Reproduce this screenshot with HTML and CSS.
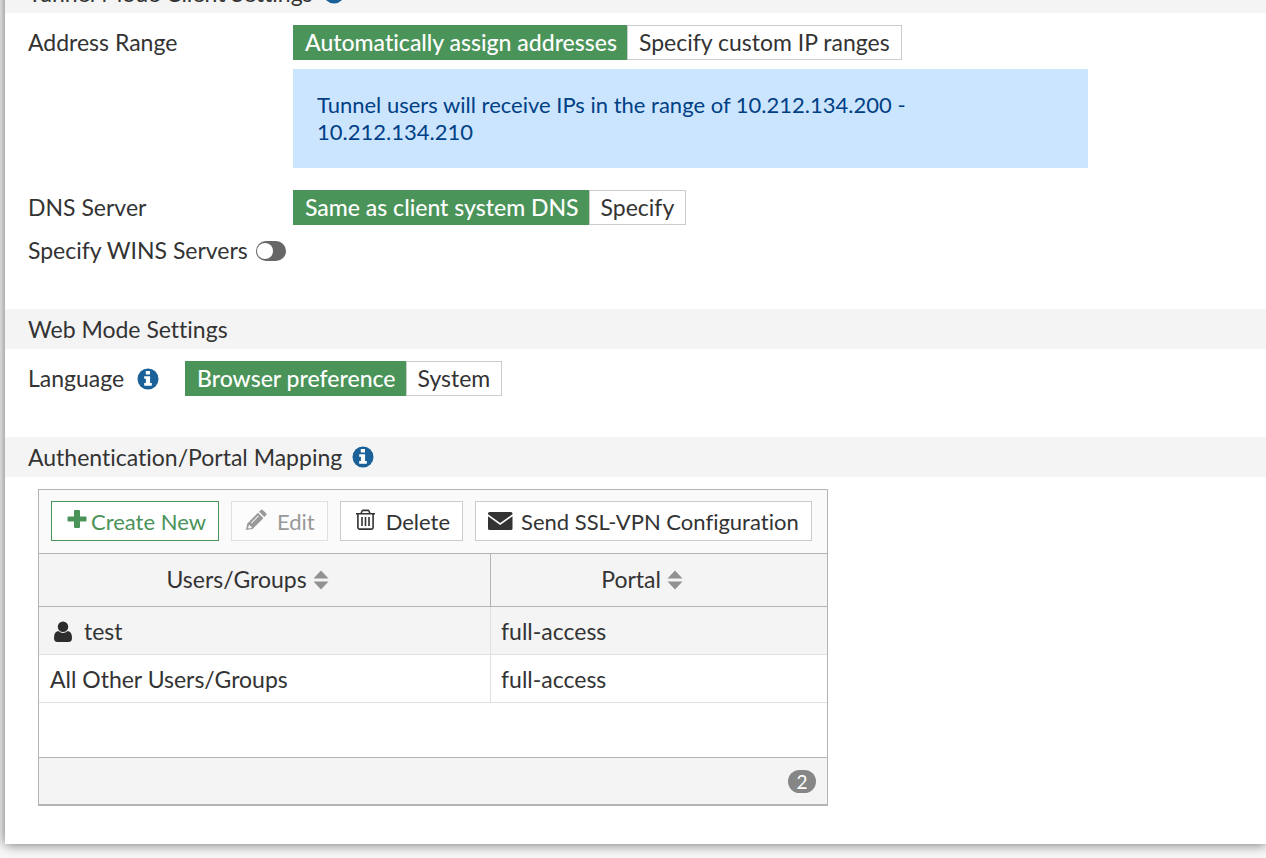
FILE: index.html
```html
<!DOCTYPE html>
<html lang="en">
<head>
<meta charset="utf-8">
<title>SSL-VPN Settings</title>
<link rel="stylesheet" href="styles.css">
</head>
<body>
<svg class="sprite" aria-hidden="true">
  <symbol id="info" viewBox="0 0 22 22">
    <circle cx="11" cy="11" r="10.5" fill="#1a6199"/>
    <path fill="#fff" d="M8.8 2.9h4.2v3.7H8.8zM7.2 8.2h5.9v6.9h1.7v2.6H7.2v-2.6h1.7v-4.3H7.2z"/>
  </symbol>
  <symbol id="sort" viewBox="0 0 16 20">
    <path fill="#919191" d="M8 .5l7.500 8H.5zM8 19.500l7.500-8H.5z"/>
  </symbol>
</svg>
<main class="panel">
  <section class="section">
    <h2 class="section-title">Tunnel Mode Client Settings <svg class="info"><use href="#info"/></svg></h2>
    <div class="fields">
      <div class="field">
        <span class="field-label" id="range-label">Address Range</span>
        <div class="field-body">
          <div class="segmented" role="radiogroup" aria-labelledby="range-label">
            <label class="segment"><input type="radio" name="range" checked>Automatically assign addresses</label>
            <label class="segment"><input type="radio" name="range">Specify custom IP ranges</label>
          </div>
          <p class="notice">Tunnel users will receive IPs in the range of 10.212.134.200 - 10.212.134.210</p>
        </div>
      </div>
      <div class="field field-dns">
        <span class="field-label" id="dns-label">DNS Server</span>
        <div class="segmented" role="radiogroup" aria-labelledby="dns-label">
          <label class="segment"><input type="radio" name="dns" checked>Same as client system DNS</label>
          <label class="segment"><input type="radio" name="dns">Specify</label>
        </div>
      </div>
      <div class="field field-wins">
        <label for="wins">Specify WINS Servers</label>
        <input class="switch" type="checkbox" role="switch" id="wins">
      </div>
    </div>
  </section>

  <section class="section">
    <h2 class="section-title">Web Mode Settings</h2>
    <div class="fields">
      <div class="field">
        <span class="field-label field-label-auto" id="lang-label">Language <svg class="info"><use href="#info"/></svg></span>
        <div class="segmented" role="radiogroup" aria-labelledby="lang-label">
          <label class="segment"><input type="radio" name="lang" checked>Browser preference</label>
          <label class="segment"><input type="radio" name="lang">System</label>
        </div>
      </div>
    </div>
  </section>

  <section class="section">
    <h2 class="section-title">Authentication/Portal Mapping <svg class="info"><use href="#info"/></svg></h2>
    <div class="grid">
      <div class="toolbar">
        <button class="btn btn-create" type="button"><svg class="btn-icon" viewBox="0 0 27 24"><path fill="currentColor" d="M12 1h4q1 0 1 1v5.500h5.500q1 0 1 1v3q0 1-1 1H17V18q0 1-1 1h-4q-1 0-1-1v-5.500H5.500q-1 0-1-1v-3q0-1 1-1H11V2q0-1 1-1z"/></svg>Create New</button>
        <button class="btn" type="button" disabled><svg class="btn-icon" viewBox="0 0 27 24"><path fill="currentColor" fill-rule="evenodd" d="M3 21l1.300-6.500L15 3.800l5.400 5.400-10.800 10.800zM5.800 16l-.7 3 .6.600 2.800-.7v-1.600H6.800V16zM8 13.800l.6.600 7.200-7.200-.6-.6zM16 2.800l1.900-1.800q.9-.9 1.900 0l3.300 3.300q.9 1 0 1.900l-1.800 1.900z"/></svg>Edit</button>
        <button class="btn" type="button"><svg class="btn-icon" viewBox="0 0 27 24"><g fill="none" stroke="currentColor" stroke-width="1.600"><path d="M4 4.800h19M9 4.500l1.200-2.700q.2-.4.700-.4h5.200q.5 0 .7.400L18 4.500M5.900 5v13.500q0 1.600 1.600 1.600h12q1.600 0 1.600-1.600V5M10 8v9M13.500 8v9M17 8v9"/></g></svg>Delete</button>
        <button class="btn" type="button"><svg class="btn-icon" viewBox="0 0 27 24"><path fill="currentColor" d="M2.500 3h21.500q1.500 0 1.500 1.500v.8L13.200 14 1 5.300v-.8Q1 3 2.500 3zM1 7.200l12.200 8.700 12.300-8.700v12.300q0 1.500-1.500 1.500H2.500Q1 21 1 19.500z"/></svg>Send SSL-VPN Configuration</button>
      </div>
      <table class="table">
        <thead>
          <tr>
            <th class="col-users" scope="col">Users/Groups <svg class="sort"><use href="#sort"/></svg></th>
            <th scope="col">Portal <svg class="sort"><use href="#sort"/></svg></th>
          </tr>
        </thead>
        <tbody>
          <tr>
            <td><svg class="user" viewBox="0 0 18 22"><path fill="#2d2d2d" d="M9 .5a5.200 5.200 0 0 1 0 10.500A5.200 5.200 0 0 1 9 .5zM4.300 10q4.700 4 9.400 0Q18 10.500 18 17q0 4-3.500 4h-11Q0 21 0 17q0-6.500 4.300-7z"/></svg>test</td>
            <td>full-access</td>
          </tr>
          <tr>
            <td>All Other Users/Groups</td>
            <td>full-access</td>
          </tr>
        </tbody>
      </table>
      <div class="grid-footer"><span class="count">2</span></div>
    </div>
  </section>
</main>
</body>
</html>
```
FILE: styles.css
```css
* {
  box-sizing: border-box;
}

body {
  display: flow-root;
  min-height: 100vh;
  margin: 0;
  background: #f8f8f8;
  color: #333;
  font: 400 23px/27px Lato, "Liberation Sans", sans-serif;
  font-variant-ligatures: none;
}

.sprite {
  display: none;
}

/* The page is scrolled: the first heading is partly above the window. */
.panel {
  margin: -27px 0 0 5px;
  padding-bottom: 38px;
  background: #fff;
  box-shadow: 0 0 12px rgba(0, 0, 0, 0.6);
}

.section-title {
  display: flex;
  align-items: center;
  gap: 10px;
  height: 40px;
  margin: 0;
  padding: 0 23px;
  background: #f4f4f4;
  font-size: 23px;
  font-weight: 400;
}

.info {
  flex: none;
  width: 22px;
  height: 22px;
}

.fields {
  padding: 12px 23px 41px;
}

.field {
  display: flex;
  align-items: flex-start;
}

.field-label {
  display: flex;
  flex: none;
  align-items: center;
  width: 265px;
  height: 35px;
}

.field-label-auto {
  gap: 13px;
  width: 157px;
}

.field-body {
  flex: 1;
}

.field-dns {
  margin-top: 22px;
}

.field-wins {
  align-items: center;
  gap: 8px;
  height: 35px;
  margin-top: 8px;
}

.segmented {
  display: flex;
}

.segment {
  position: relative;
  height: 35px;
  padding: 3px 11px;
  border: 1px solid #ccc;
  background: #fff;
  white-space: nowrap;
}

.segment:has(input:checked) {
  padding-right: 10px;
  border-color: #4a9359;
  border-right: 0;
  background: #4a9359;
  color: #fff;
  font-weight: 500;
}

.segment input {
  position: absolute;
  inset: 0;
  margin: 0;
  appearance: none;
}

.notice {
  max-width: 795px;
  margin: 9px 0 0;
  padding: 22px 24px 23px;
  background: #cce5ff;
  color: #004085;
  font-size: 22px;
}

.switch {
  position: relative;
  width: 30px;
  height: 20px;
  margin: 0;
  border-radius: 10px;
  background: #666;
  appearance: none;
}

.switch::before {
  content: "";
  position: absolute;
  top: 2px;
  left: 1px;
  width: 16px;
  height: 16px;
  border-radius: 50%;
  background: #fff;
}

.grid {
  max-width: 790px;
  margin: 12px 33px 0;
  border: 1px solid #b4b4b4;
  border-bottom-width: 2px;
}

.toolbar {
  display: flex;
  gap: 12px;
  padding: 11px 12px 12px;
  background: #fafafa;
}

.btn {
  display: flex;
  align-items: center;
  gap: 7px;
  height: 40px;
  padding: 0 12px 0 11px;
  border: 1px solid #ccc;
  background: #fff;
  color: #333;
  font: inherit;
  font-size: 22px;
  white-space: nowrap;
}

.btn-create {
  gap: 1px;
  border-color: #4a9359;
  color: #4a9359;
}

.btn:disabled {
  border-color: #e0e0e0;
  background: #fcfcfc;
  color: #999;
}

.btn-icon {
  flex: none;
  width: 27px;
  height: 24px;
}

.table {
  width: 100%;
  border-collapse: separate;
  border-spacing: 0;
  table-layout: fixed;
}

.table th {
  height: 54px;
  padding: 0 34px 2px 0;
  border: solid #b4b4b4;
  border-width: 1px 0;
  background: #f4f4f4;
  font-weight: 400;
}

.table .col-users {
  width: 452px;
  border-right-width: 1px;
}

.table td {
  height: 48px;
  padding: 2px 10px 0 11px;
  border-bottom: 1px solid #e0e0e0;
}

.table td:first-child {
  border-right: 1px solid #e0e0e0;
}

.table td + td {
  padding-left: 10px;
}

.table tbody tr:first-child {
  background: #f4f4f4;
}

.sort {
  width: 16px;
  height: 20px;
  vertical-align: -2px;
}

.user {
  width: 18px;
  height: 22px;
  margin: 0 12px 0 4px;
  vertical-align: -3px;
}

.grid-footer {
  display: flex;
  align-items: center;
  justify-content: flex-end;
  height: 47px;
  margin-top: 54px;
  padding: 0 11px;
  border-top: 1px solid #b4b4b4;
  background: #f4f4f4;
}

.count {
  width: 28px;
  border-radius: 12px;
  background: #868686;
  color: #fff;
  font-size: 19px;
  line-height: 23px;
  text-align: center;
}
```
